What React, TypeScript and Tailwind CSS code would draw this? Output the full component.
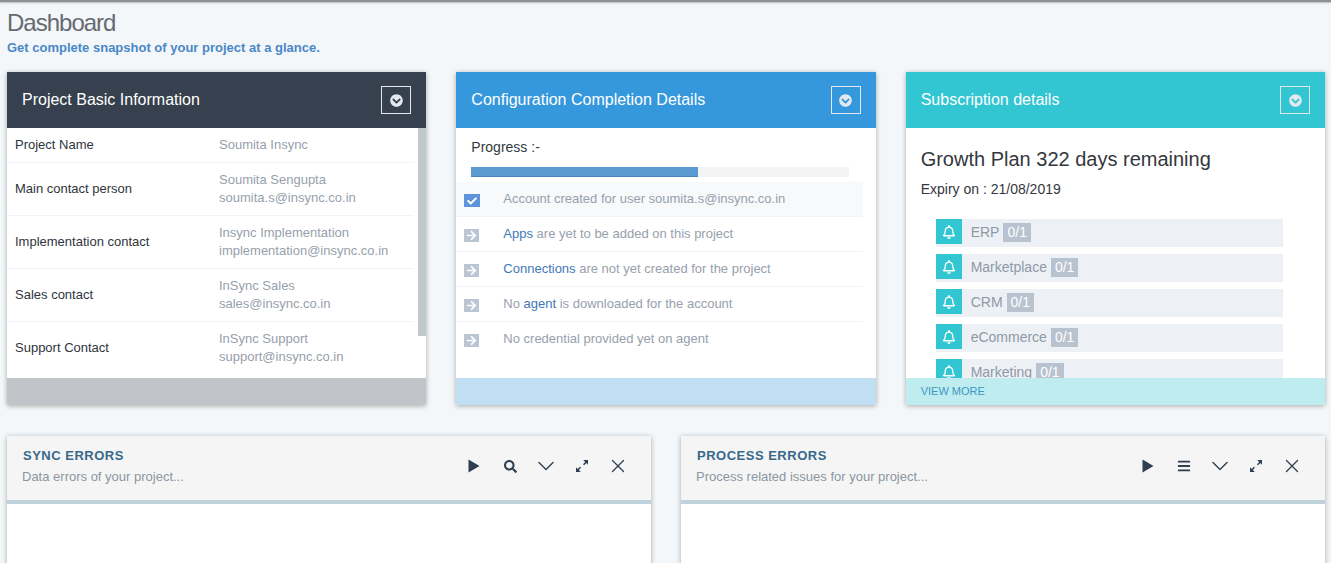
import React from 'react';
import { ChevronDown, X } from 'lucide-react';
import { FaArrowRight, FaBars, FaCheck, FaChevronCircleDown, FaRegBell, FaSearch } from 'react-icons/fa';

const contacts = [
  { label: 'Project Name', lines: ['Soumita Insync'], row: 'h-[35px]' },
  { label: 'Main contact person', lines: ['Soumita Sengupta', 'soumita.s@insync.co.in'], row: 'h-[53px]' },
  { label: 'Implementation contact', lines: ['Insync Implementation', 'implementation@insync.co.in'], row: 'h-[53px]' },
  { label: 'Sales contact', lines: ['InSync Sales', 'sales@insync.co.in'], row: 'h-[53px]' },
  { label: 'Support Contact', lines: ['InSync Support', 'support@insync.co.in'], row: 'h-[53px] border-transparent' },
];

const plans = ['ERP', 'Marketplace', 'CRM', 'eCommerce', 'Marketing'];

function ExpandIcon() {
  return (
    <svg viewBox="0 0 14 14" className="h-[14px] w-[14px] text-[#2f3e50]" fill="currentColor">
      <path d="M8.2 1h4.8v4.8l-1.7-1.7-2.2 2.2-1.1-1.1 2.2-2.2z" />
      <path d="M5.8 13H1V8.2l1.7 1.7 2.2-2.2 1.1 1.1-2.2 2.2z" />
    </svg>
  );
}

function PlayIcon() {
  return (
    <svg viewBox="0 0 12 14" className="h-[14px] w-3 text-[#2f3e50]" fill="currentColor">
      <path d="M0.5 0.5 11.5 7 0.5 13.5z" />
    </svg>
  );
}

function Card({ title, headerClass, footerClass, footer, children }: {
  title: string;
  headerClass: string;
  footerClass: string;
  footer?: string;
  children: React.ReactNode;
}) {
  return (
    <div className="relative flex h-[333px] flex-col overflow-hidden rounded-b-[2px] bg-white shadow-[0_1px_5px_rgba(0,0,0,0.32)]">
      <div className={`flex h-14 shrink-0 items-center justify-between px-[15px] ${headerClass}`}>
        <span className="text-[16px] text-white">{title}</span>
        <span className="flex h-7 w-[30px] items-center justify-center border border-[#e3e8ee]">
          <FaChevronCircleDown className="h-[13px] w-[13px] text-[#e3e8f0]" />
        </span>
      </div>
      <div className="min-h-0 flex-1 overflow-hidden">{children}</div>
      <div className={`flex h-[27px] shrink-0 items-center pl-[15px] text-[11px] text-[#3a98c4] ${footerClass}`}>{footer}</div>
    </div>
  );
}

function Step({ first, last, children }: { first?: boolean; last?: boolean; children: React.ReactNode }) {
  return (
    <div className={`flex h-[35px] items-start border-b pl-2 pt-2 leading-[18px] text-[#97a0ac] ${last ? 'border-transparent' : 'border-[#f1f3f7]'} ${first ? 'bg-[#f8f9fb]' : ''}`}>
      <span className={`mt-1 flex h-[13px] items-center justify-center ${first ? 'w-4 bg-[#5e94dc]' : 'w-[15px] bg-[#bcc5d2]'}`}>
        {first ? <FaCheck className="h-[10px] w-[10px] text-white" /> : <FaArrowRight className="h-[11px] w-[11px] text-white" />}
      </span>
      <span className={first ? 'ml-[23px]' : 'ml-6'}>{children}</span>
    </div>
  );
}

function Panel({ title, subtitle, middle }: { title: string; subtitle: string; middle: React.ReactNode }) {
  return (
    <div className="h-[200px] bg-white shadow-[0_1px_5px_rgba(0,0,0,0.32)]">
      <div className="flex h-[68px] items-center justify-between border-b-4 border-[#c0d2dc] bg-[#f5f5f5] px-[15px]">
        <div className="-mt-[3px]">
          <div className="ml-px text-[13px] font-bold leading-[20px] tracking-[0.5px] text-[#37698a]">{title}</div>
          <div className="mt-px text-[13px] leading-[20px] text-[#8c96a2]">{subtitle}</div>
        </div>
        <div className="-mt-[4px] flex items-center text-[#2f3e50]">
          <span className="flex w-9 justify-center"><PlayIcon /></span>
          <span className="flex w-9 justify-center">{middle}</span>
          <span className="flex h-4 w-9 items-center justify-center"><ChevronDown className="h-7 w-7 shrink-0" strokeWidth={1.2} /></span>
          <span className="flex w-9 justify-center"><ExpandIcon /></span>
          <span className="flex h-4 w-9 items-center justify-center"><X className="h-[22px] w-[22px] shrink-0" strokeWidth={1.4} /></span>
        </div>
      </div>
    </div>
  );
}

export default function App() {
  return (
    <div className="h-[563px] overflow-hidden bg-[#f4f7f9] font-['Liberation_Sans',Arial,sans-serif]">
      <div className="h-[2px] bg-[#8f8f8f] shadow-[0_1px_2px_rgba(0,0,0,0.25)]" />
      <div className="pl-[7px] pr-[6px]">
        <h1 className="mt-[6px] text-[24px] leading-[29px] tracking-[-1px] text-[#666a70]">Dashboard</h1>
        <p className="mt-px text-[13px] font-bold leading-[19px] text-[#4a87c8]">Get complete snapshot of your project at a glance.</p>

        <div className="mt-[15px] grid grid-cols-3 gap-[30px]">
          <Card title="Project Basic Information" headerClass="bg-[#36404e]" footerClass="bg-[#c1c4c9]">
            <div className="relative h-full text-[13px]">
              <div className="mr-3">
                {contacts.map(c => (
                  <div key={c.label} className={`flex items-center border-b border-[#f1f3f7] pl-2 ${c.row}`}>
                    <div className="w-[204px] text-[#2f353b]">{c.label}</div>
                    <div className="leading-[18px] text-[#97a0ac]">
                      {c.lines.map(line => <div key={line}>{line}</div>)}
                    </div>
                  </div>
                ))}
              </div>
              <div className="absolute right-0 top-0 h-[208px] w-2 bg-[#bfc9c9]" />
            </div>
          </Card>

          <Card title="Configuration Completion Details" headerClass="bg-[#3598dc]" footerClass="bg-[#c0dff3]">
            <div className="text-[13px]">
              <div className="px-[15px] pt-[10px] text-[14px] leading-[18px] text-[#333a42]">Progress :-</div>
              <div className="ml-[15px] mr-[27px] mt-[11px] h-[10px] bg-[#f4f4f4]">
                <div className="h-full w-[60%] border-b border-[#4a86bd] bg-[#5b9bd1]" />
              </div>
              <div className="mr-[13px] mt-[5px]">
                <Step first>Account created for user soumita.s@insync.co.in</Step>
                <Step><span className="text-[#3f78b8]">Apps</span> are yet to be added on this project</Step>
                <Step><span className="text-[#3f78b8]">Connections</span> are not yet created for the project</Step>
                <Step>No <span className="text-[#3f78b8]">agent</span> is downloaded for the account</Step>
                <Step last>No credential provided yet on agent</Step>
              </div>
            </div>
          </Card>

          <Card title="Subscription details" headerClass="bg-[#32c5d2]" footerClass="bg-[#bfecef]" footer="VIEW MORE">
            <div className="px-[15px] pt-[19px]">
              <div className="text-[20px] leading-6 text-[#34383d]">Growth Plan 322 days remaining</div>
              <div className="mt-[8px] text-[14px] leading-[20px] text-[#34383d]">Expiry on : 21/08/2019</div>
              <div className="ml-[15px] mr-[27px] mt-5 flex flex-col gap-[7px]">
                {plans.map(plan => (
                  <div key={plan} className="flex h-7 shrink-0 items-start bg-[#edf0f5] text-[14px] text-[#8e99a7]">
                    <span className="flex h-[25px] w-[26px] items-center justify-center bg-[#32c5d2]">
                      <FaRegBell className="h-[14px] w-[14px] text-white" />
                    </span>
                    <span className="ml-[9px] mt-[4px] leading-[19px]">{plan}</span>
                    <span className="ml-1 mt-[4px] h-[19px] bg-[#b9c2cf] px-1 leading-[19px] text-white">0/1</span>
                  </div>
                ))}
              </div>
            </div>
          </Card>
        </div>

        <div className="mt-[31px] grid grid-cols-2 gap-[30px]">
          <Panel title="SYNC ERRORS" subtitle="Data errors of your project..." middle={<FaSearch className="h-[13px] w-[13px]" />} />
          <Panel title="PROCESS ERRORS" subtitle="Process related issues for your project..." middle={<FaBars className="h-[14px] w-[14px]" />} />
        </div>
      </div>
    </div>
  );
}
